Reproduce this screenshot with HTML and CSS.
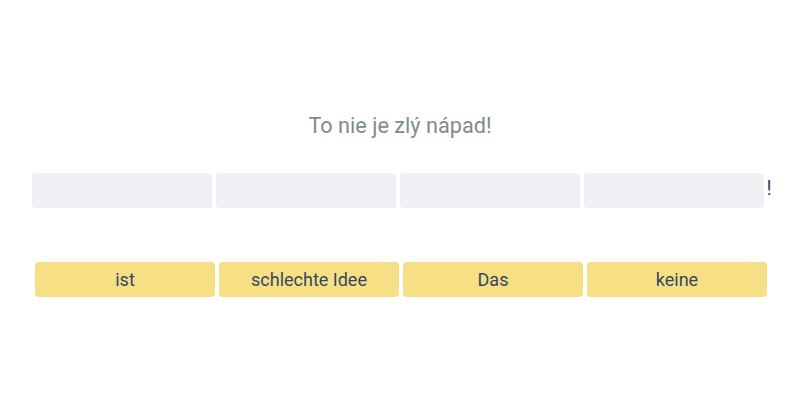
FILE: index.html
```html
<!DOCTYPE html>
<html>
<head>
<meta charset="utf-8">
<link rel="stylesheet" href="styles.css">
</head>
<body>
<div class="page">
  <div class="title">To nie je zlý nápad!</div>
  <div class="answer-row">
    <div class="slot"></div>
    <div class="slot"></div>
    <div class="slot"></div>
    <div class="slot"></div>
    <span class="punct">!</span>
  </div>
  <div class="choices">
    <div class="chip">ist</div>
    <div class="chip">schlechte Idee</div>
    <div class="chip">Das</div>
    <div class="chip">keine</div>
  </div>
</div>
</body>
</html>
```
FILE: styles.css
```css
html, body {
  margin: 0;
  padding: 0;
  background: #ffffff;
}
.page {
  width: 800px;
  height: 400px;
  display: flex;
  flex-direction: column;
  align-items: center;
  font-family: Roboto, "Noto Sans", sans-serif;
}
.title {
  margin-top: 112px;
  height: 28px;
  line-height: 28px;
  font-size: 21.7px;
  color: #7f8c8d;
}
.answer-row {
  margin-top: 33px;
  display: flex;
  gap: 4px;
  align-items: center;
  padding-left: 4px;
}
.slot {
  width: 180px;
  height: 35px;
  background: #eff0f4;
  border-radius: 4px;
}
.punct {
  font-size: 20px;
  color: #34495e;
  margin-left: -2px;
  line-height: 24px;
  margin-top: -6px;
}
.choices {
  margin-top: 54px;
  display: flex;
  gap: 4px;
  padding-left: 2px;
}
.chip {
  width: 180px;
  height: 35px;
  background: #f8df86;
  border-radius: 4px;
  display: flex;
  align-items: center;
  justify-content: center;
  font-size: 18px;
  color: #34495e;
}
```
